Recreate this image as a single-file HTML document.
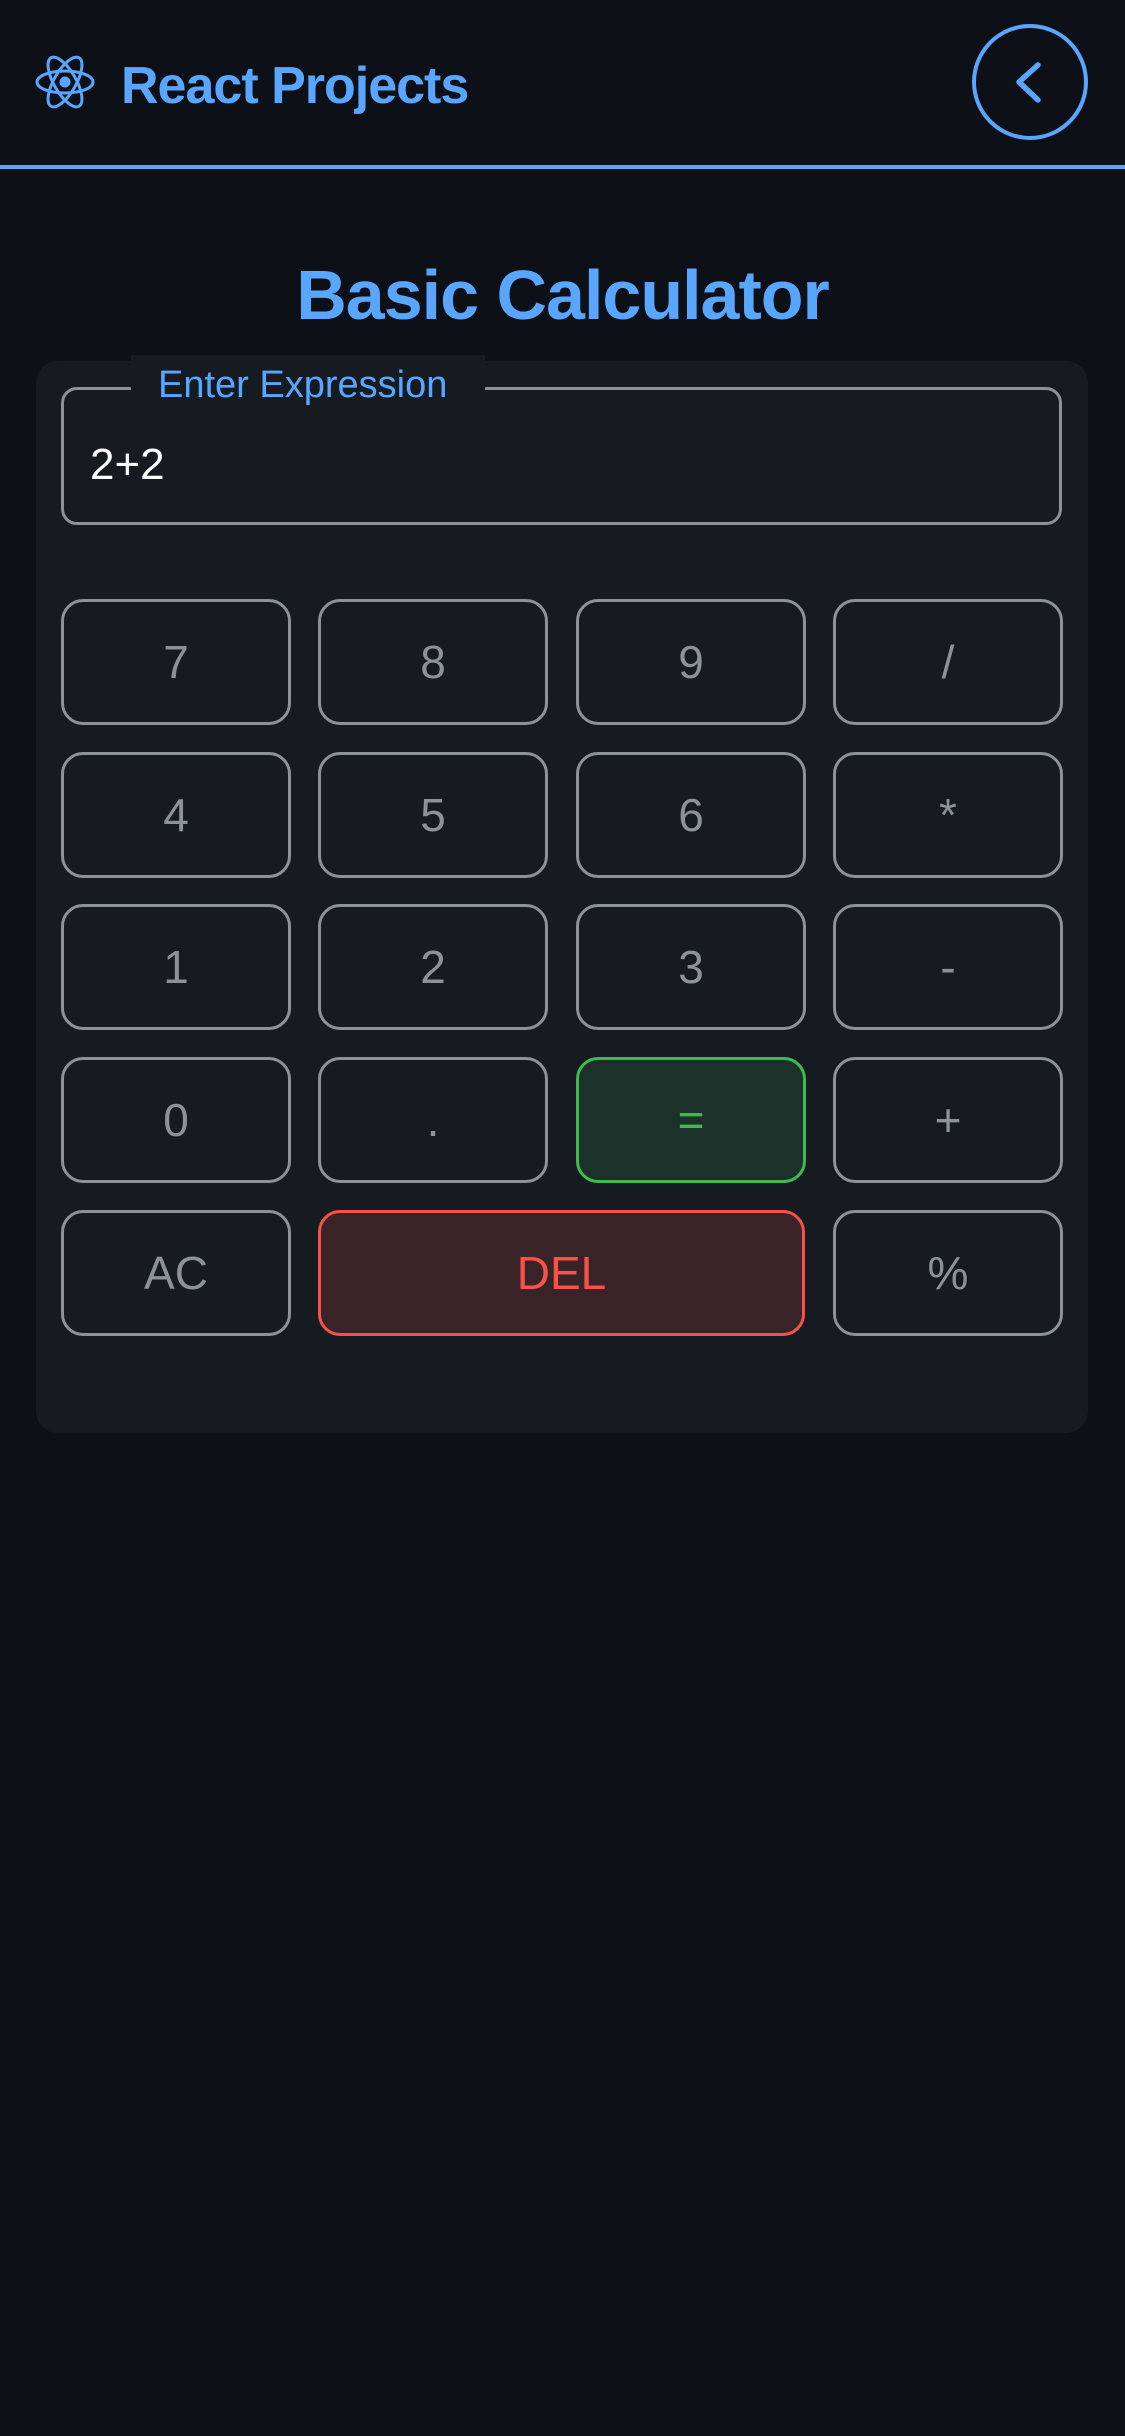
<!DOCTYPE html>
<html><head><meta charset="utf-8"><style>
*{box-sizing:border-box;margin:0;padding:0}
body{width:1125px;height:2436px;background:#0d1117;font-family:"Liberation Sans",sans-serif;position:relative;overflow:hidden}
.hdr{position:absolute;left:0;top:0;width:1125px;height:169px;border-bottom:4px solid #58a6ff}
.brand{position:absolute;left:121px;top:56px;font-size:52px;font-weight:bold;color:#58a6ff;letter-spacing:-1px}
h1{position:absolute;left:0;width:1125px;top:255px;text-align:center;font-size:70px;font-weight:bold;color:#58a6ff;letter-spacing:-1px}
.card{position:absolute;left:36px;top:361px;width:1052px;height:1072px;background:#161b22;border-radius:22px}
.fs{position:absolute;left:61px;top:387px;width:1001px;height:138px;border:3px solid #8b929a;border-radius:16px}
.leg{position:absolute;left:131px;top:355px;width:354px;height:50px;background:#161b22;color:#58a6ff;font-size:38px;padding-left:27px;padding-top:9px}
.val{position:absolute;left:90px;top:440px;font-size:44px;color:#fff}
.b{position:absolute;width:230px;height:126px;border:3px solid #8b929a;border-radius:22px;color:#8b929a;font-size:46px;display:flex;align-items:center;justify-content:center;background:#161b22}
.eq{background:#1c3129;border-color:#3fb950;color:#3fb950}
.del{background:#3a2327;border-color:#f85149;color:#f85149}
</style></head><body>
<div class="hdr">
<svg style="position:absolute;left:35px;top:54px" width="60" height="56" viewBox="-30 -28 60 56">
<g fill="none" stroke="#58a6ff" stroke-width="3"><ellipse rx="28" ry="11"/><ellipse rx="28" ry="11" transform="rotate(60)"/><ellipse rx="28" ry="11" transform="rotate(120)"/></g>
<circle r="5.5" fill="#58a6ff"/></svg>
<div class="brand">React Projects</div>
<svg style="position:absolute;left:970px;top:22px" width="120" height="120" viewBox="0 0 120 120">
<circle cx="60" cy="60" r="56" fill="none" stroke="#58a6ff" stroke-width="4"/>
<path d="M68 43 L49 60 L68 78" fill="none" stroke="#58a6ff" stroke-width="5.5" stroke-linecap="round" stroke-linejoin="round"/></svg>
</div>
<h1>Basic Calculator</h1>
<div class="card"></div>
<div class="fs"></div>
<div class="leg">Enter Expression</div>
<div class="val">2+2</div>
<div class="b" style="left:61px;top:599px">7</div>
<div class="b" style="left:318px;top:599px">8</div>
<div class="b" style="left:576px;top:599px">9</div>
<div class="b" style="left:833px;top:599px">/</div>
<div class="b" style="left:61px;top:752px">4</div>
<div class="b" style="left:318px;top:752px">5</div>
<div class="b" style="left:576px;top:752px">6</div>
<div class="b" style="left:833px;top:752px">*</div>
<div class="b" style="left:61px;top:904px">1</div>
<div class="b" style="left:318px;top:904px">2</div>
<div class="b" style="left:576px;top:904px">3</div>
<div class="b" style="left:833px;top:904px">-</div>
<div class="b" style="left:61px;top:1057px">0</div>
<div class="b" style="left:318px;top:1057px">.</div>
<div class="b eq" style="left:576px;top:1057px">=</div>
<div class="b" style="left:833px;top:1057px">+</div>
<div class="b" style="left:61px;top:1210px">AC</div>
<div class="b del" style="left:318px;top:1210px;width:487px">DEL</div>
<div class="b" style="left:833px;top:1210px">%</div>
</body></html>
